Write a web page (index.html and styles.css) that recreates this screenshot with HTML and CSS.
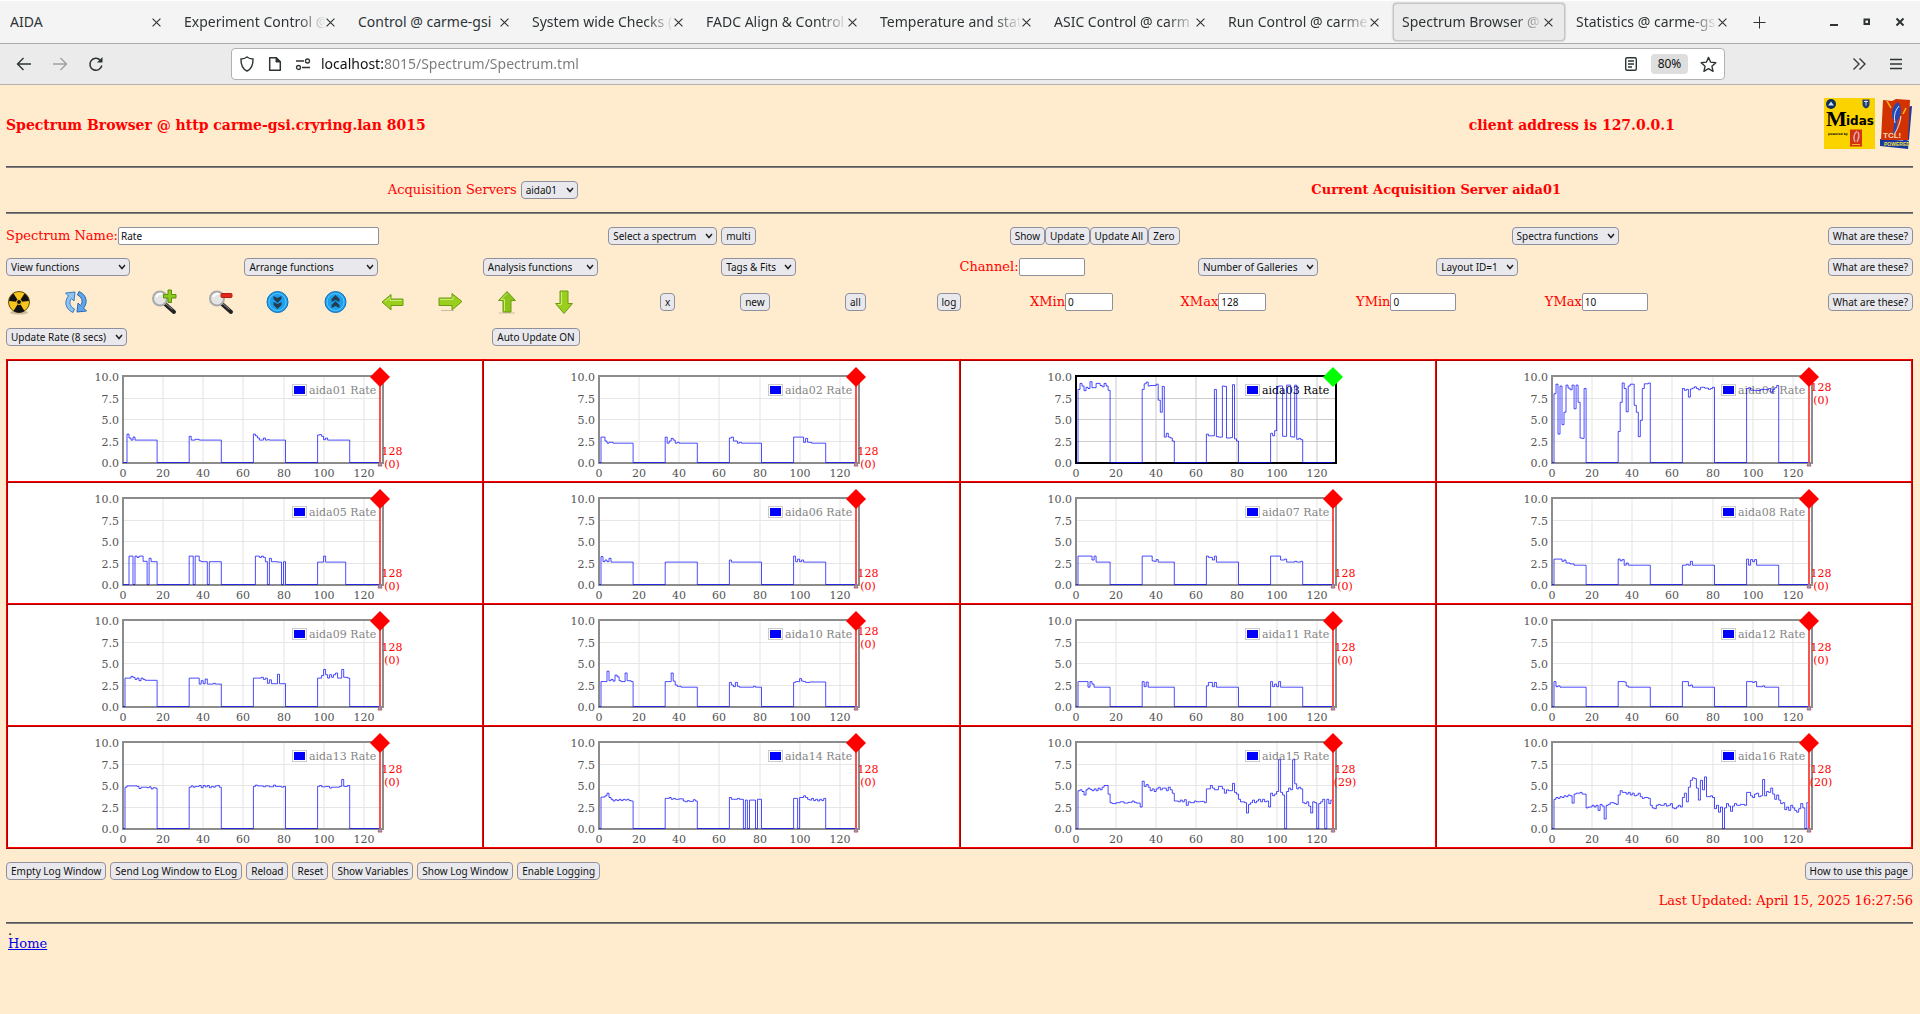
FILE: index.html
```html
<!DOCTYPE html>
<html lang="en">
<head>
    <meta charset="UTF-8">
    <meta name="viewport" content="width=device-width, initial-scale=1.0">
    <title>Spectrum Browser @ carme-gsi</title>

    <link rel="stylesheet" href="styles.css">
</head>
<body>
    <div class="browser">
        <div class="tab-bar">
            <div class="tab"><span class="tab-title">AIDA</span><button class="tab-close" aria-label="Close tab"><svg viewBox="0 0 8 8"><path d="M0.5 0.5l7 7M7.5 0.5l-7 7"/></svg></button></div>
            <div class="tab"><span class="tab-title fade">Experiment Control @</span><button class="tab-close" aria-label="Close tab"><svg viewBox="0 0 8 8"><path d="M0.5 0.5l7 7M7.5 0.5l-7 7"/></svg></button></div>
            <div class="tab"><span class="tab-title">Control @ carme-gsi</span><button class="tab-close" aria-label="Close tab"><svg viewBox="0 0 8 8"><path d="M0.5 0.5l7 7M7.5 0.5l-7 7"/></svg></button></div>
            <div class="tab"><span class="tab-title fade">System wide Checks (</span><button class="tab-close" aria-label="Close tab"><svg viewBox="0 0 8 8"><path d="M0.5 0.5l7 7M7.5 0.5l-7 7"/></svg></button></div>
            <div class="tab"><span class="tab-title fade">FADC Align &amp; Control</span><button class="tab-close" aria-label="Close tab"><svg viewBox="0 0 8 8"><path d="M0.5 0.5l7 7M7.5 0.5l-7 7"/></svg></button></div>
            <div class="tab"><span class="tab-title fade">Temperature and stat</span><button class="tab-close" aria-label="Close tab"><svg viewBox="0 0 8 8"><path d="M0.5 0.5l7 7M7.5 0.5l-7 7"/></svg></button></div>
            <div class="tab"><span class="tab-title fade">ASIC Control @ carm</span><button class="tab-close" aria-label="Close tab"><svg viewBox="0 0 8 8"><path d="M0.5 0.5l7 7M7.5 0.5l-7 7"/></svg></button></div>
            <div class="tab"><span class="tab-title fade">Run Control @ carme</span><button class="tab-close" aria-label="Close tab"><svg viewBox="0 0 8 8"><path d="M0.5 0.5l7 7M7.5 0.5l-7 7"/></svg></button></div>
            <div class="tab active"><span class="tab-title fade">Spectrum Browser @</span><button class="tab-close" aria-label="Close tab"><svg viewBox="0 0 8 8"><path d="M0.5 0.5l7 7M7.5 0.5l-7 7"/></svg></button></div>
            <div class="tab"><span class="tab-title fade">Statistics @ carme-gs</span><button class="tab-close" aria-label="Close tab"><svg viewBox="0 0 8 8"><path d="M0.5 0.5l7 7M7.5 0.5l-7 7"/></svg></button></div>
            <button class="chrome-button new-tab" aria-label="New tab"><svg width="13" height="13" viewBox="0 0 13 13"><path d="M6.5 0.5v12M0.5 6.5h12"/></svg></button>
            <div class="window-controls">
                <button class="chrome-button" aria-label="Minimize"><svg width="10" height="10" viewBox="0 0 10 10"><path d="M1 8h8" stroke-width="2"/></svg></button>
                <button class="chrome-button" aria-label="Restore"><svg width="10" height="10" viewBox="0 0 10 10"><path d="M2.500 2.500h4.500v4.500h-4.500z" stroke-width="2"/></svg></button>
                <button class="chrome-button" aria-label="Close window"><svg width="10" height="10" viewBox="0 0 10 10"><path d="M1.500 1.500l7 7M8.500 1.500l-7 7" stroke-width="2"/></svg></button>
            </div>
        </div>
        <div class="nav-bar">
            <div class="nav-buttons">
                <button class="chrome-button" aria-label="Back"><svg width="16" height="16" viewBox="0 0 16 16"><path d="M15 8H1.500M7.500 2L1.500 8l6 6" stroke-width="1.400"/></svg></button>
                <button class="chrome-button disabled" aria-label="Forward"><svg width="16" height="16" viewBox="0 0 16 16"><path d="M1 8h13.500M8.500 2l6 6-6 6" stroke-width="1.400"/></svg></button>
                <button class="chrome-button" aria-label="Reload"><svg width="16" height="16" viewBox="0 0 16 16"><path d="M13.800 9.500A6 6 0 1 1 12.300 4.200" stroke-width="1.500"/><path d="M14.500 1v5.500H9z" fill="#2e3436" stroke="none"/></svg></button>
            </div>
            <div class="url-box">
                <svg width="16" height="16" viewBox="0 0 16 16"><path d="M8 1C6 2.600 4 3 2 3c-.2 6 1.500 10 6 12 4.500-2 6.200-6 6-12-2 0-4-.4-6-2z" stroke-width="1.400"/></svg>
                <svg width="16" height="16" viewBox="0 0 16 16"><path d="M2.700 1.700h6.600l4 4v8.600H2.700z" stroke-width="1.500" stroke-linejoin="round"/><path d="M9 1.500v4.500h4.500z" fill="#2e3436"/></svg>
                <svg width="16" height="16" viewBox="0 0 16 16"><path d="M1 5h8M7 11.500h8" stroke-width="1.500"/><circle cx="12.500" cy="5" r="2" stroke-width="1.300"/><circle cx="3.500" cy="11.500" r="2" stroke-width="1.300"/></svg>
                <input class="url" type="text" aria-label="Address" value="localhost:8015/Spectrum/Spectrum.tml">
                <svg width="16" height="16" viewBox="0 0 16 16"><rect x="2.700" y="1.700" width="10.600" height="12.600" rx="1.500" stroke-width="1.400"/><path d="M5 5h6M5 8h6M5 11h4" stroke-width="1.300"/></svg>
                <button class="zoom-level">80%</button>
                <svg width="17" height="17" viewBox="0 0 16 16"><path d="M8 1.300l2 4.500 4.900.5-3.700 3.300 1.100 4.800L8 11.900l-4.300 2.500 1.100-4.800L1.100 6.300 6 5.800z" stroke-width="1.300" stroke-linejoin="round"/></svg>
            </div>
            <div class="nav-menu">
                <button class="chrome-button" aria-label="More tools"><svg width="14" height="14" viewBox="0 0 14 14"><path d="M1.500 1.500L7 7l-5.500 5.500M7.500 1.500L13 7l-5.500 5.500" stroke-width="1.300"/></svg></button>
                <button class="chrome-button" aria-label="Menu"><svg width="14" height="14" viewBox="0 0 14 14"><path d="M1 2.500h12M1 7h12M1 11.500h12" stroke-width="1.300"/></svg></button>
            </div>
        </div>
    </div>

    <main>
        <header>
            <h1>Spectrum Browser @ http carme-gsi.cryring.lan 8015</h1>
            <h1>client address is 127.0.0.1</h1>
            <div class="logos">
                <svg class="logo-midas" viewBox="0 0 51 51" aria-label="Midas">
                    <rect width="51" height="51" fill="#fbd400"/>
                    <circle cx="7" cy="6" r="5" fill="#0c2f60"/>
                    <path d="M4 7.500l3-4 3 4z" fill="#cfe3ee"/>
                    <path d="M38.500 1.500h7v4.500q0 3-3.500 4.500-3.500-1.500-3.500-4.500z" fill="#1d3a78"/>
                    <path d="M40 3.500h4M42 2.500v5" stroke="#dde" fill="none"/>
                    <text x="2" y="28" class="logo-m">M</text>
                    <text x="22" y="27" class="logo-idas">idas</text>
                    <text x="4" y="37" class="logo-small">powered by</text>
                    <rect x="26" y="31.500" width="12" height="17" fill="#d4330c"/>
                    <path d="M33 33q-5 5-2 11M34 34q2 4-1 10" stroke="#d9a9c0" fill="none" stroke-width="1.500"/>
                    <path d="M28 46.500h8" stroke="#f2b52c" fill="none"/>
                </svg>
                <svg class="logo-tcl" viewBox="0 0 33 51" aria-label="Tcl powered">
                    <path d="M26 9l6-1-3 34-6 2z" fill="#1838a0"/>
                    <path d="M0 41l29 2-1 8-28-3z" fill="#1838a0"/>
                    <path d="M3 2l9 1 4-2 14 1-2 40L1 42z" fill="#d23200"/>
                    <path d="M18 4c-6 4-8 12-4 19 0 6-1 10-1 14 4-4 4-9 4-14 5-5 5-14 1-19z" fill="#2448b4"/>
                    <path d="M19 8c-5 6-5 11-4 17M21 18c-1 7-3 12-6 17" stroke="#dfe8ff" fill="none"/>
                    <path d="M7 3l4 7M26 10l-3 6" stroke="#f5c020" fill="none" stroke-width="1.500"/>
                    <text x="3" y="40" class="logo-tcl-text">TCL!</text>
                    <text x="4" y="48" class="logo-powered">POWERED</text>
                </svg>
            </div>
        </header>
        <hr>
        <section class="row servers">
            <div>
                <label for="server">Acquisition Servers</label>
                <select id="server"><option>aida01</option></select>
            </div>
            <strong>Current Acquisition Server aida01</strong>
        </section>
        <hr>
        <section class="row spectrum">
            <div class="field"><label for="spectrum-name">Spectrum Name:</label><input id="spectrum-name" type="text" value="Rate"></div>
            <div>
                <select aria-label="Select a spectrum"><option>Select a spectrum</option></select>
                <button>multi</button>
            </div>
            <div class="field"><button>Show</button><button>Update</button><button>Update All</button><button>Zero</button></div>
            <div><select aria-label="Spectra functions"><option>Spectra functions</option></select></div>
            <button class="help">What are these?</button>
        </section>
        <section class="row functions">
            <div><select class="select-view" aria-label="View functions"><option>View functions</option></select></div>
            <div><select class="select-arrange" aria-label="Arrange functions"><option>Arrange functions</option></select></div>
            <div><select class="select-analysis" aria-label="Analysis functions"><option>Analysis functions</option></select></div>
            <div><select aria-label="Tags and fits"><option>Tags &amp; Fits</option></select></div>
            <div class="field"><label for="channel">Channel:</label><input id="channel" type="text"></div>
            <div><select aria-label="Number of galleries"><option>Number of Galleries</option></select></div>
            <div><select aria-label="Layout"><option>Layout ID=1</option></select></div>
            <button class="help">What are these?</button>
        </section>
        <section class="row tools">
            <button class="icon" aria-label="Clear">
                <svg viewBox="0 0 26 26"><ellipse cx="13" cy="23.500" rx="9" ry="2" fill="#0003"/><circle cx="13" cy="13" r="10.500" fill="#f8c51c" stroke="#5b5006"/><path d="M13 13L3 12a10 10 0 0 1 4.500-7.500zM13 13l5.500-8.500A10 10 0 0 1 23 12zM13 13l5.500 9a10 10 0 0 1-11 0z" fill="#111"/><circle cx="13" cy="13" r="2.500" fill="#111" stroke="#f8c51c"/></svg>
            </button>
            <button class="icon" aria-label="Refresh">
                <svg viewBox="0 0 26 26"><path d="M10 23.500C2 20 1 12 5.500 7L2.500 4l9.500-1-1 9-2.500-2.500C5.500 13 7 18 11.500 20z" fill="#8ec3f2" stroke="#3a7cc4"/><path d="M16 2.500C24 6 25 14 20.500 19l3 3-9.500 1 1-9 2.500 2.500C20.500 13 19 8 14.500 6z" fill="#5fa5ea" stroke="#2a68b4"/></svg>
            </button>
            <button class="icon" aria-label="Zoom in">
                <svg viewBox="0 0 26 26"><path d="M14 15l9 8" stroke="#222" stroke-width="4" stroke-linecap="round"/><path d="M14.500 14.500l7 6" stroke="#999" stroke-width="1"/><circle cx="9" cy="9.500" r="7" fill="#e4e4e2" stroke="#aaa" stroke-width="2"/><path d="M5 8q2-4 6-3" stroke="#fff" stroke-width="2" fill="none"/><path d="M17 1h3.500v4.500H25V9h-4.500v4.500H17V9h-4.500V5.500H17z" fill="#8ccc1c" stroke="#5b8f08"/></svg>
            </button>
            <button class="icon" aria-label="Zoom out">
                <svg viewBox="0 0 26 26"><path d="M14 15l9 8" stroke="#222" stroke-width="4" stroke-linecap="round"/><path d="M14.500 14.500l7 6" stroke="#999" stroke-width="1"/><circle cx="9" cy="9.500" r="7" fill="#e4e4e2" stroke="#aaa" stroke-width="2"/><path d="M5 8q2-4 6-3" stroke="#fff" stroke-width="2" fill="none"/><rect x="13" y="4.500" width="11" height="4" rx="1" fill="#e0281c" stroke="#b61c10"/></svg>
            </button>
            <button class="icon" aria-label="Compress">
                <svg viewBox="0 0 26 26"><circle cx="12.500" cy="13" r="10.500" fill="#1ba0ee" stroke="#0e6fba"/><circle cx="12.500" cy="13" r="8.500" fill="none" stroke="#62c4fa"/><path d="M8.500 7l4 2 4-2v3l-4 4-4-4zM8.500 13l4 2 4-2v3l-4 4-4-4z" fill="#263c50"/></svg>
            </button>
            <button class="icon" aria-label="Expand">
                <svg viewBox="0 0 26 26"><circle cx="12.500" cy="13" r="10.500" fill="#1ba0ee" stroke="#0e6fba"/><circle cx="12.500" cy="13" r="8.500" fill="none" stroke="#62c4fa"/><path d="M8.500 13l4-2 4 2v-3l-4-4-4 4zM8.500 19l4-2 4 2v-3l-4-4-4 4z" fill="#263c50"/></svg>
            </button>
            <button class="icon" aria-label="Left">
                <svg viewBox="0 0 26 26"><path d="M2 13l9-7.500V10h12v6.500H11V21z" fill="#9bcf1e" stroke="#6b9c10"/><path d="M5 12.500l5-4v3h12" stroke="#cdec7a" fill="none"/></svg>
            </button>
            <button class="icon" aria-label="Right">
                <svg viewBox="0 0 26 26"><path d="M25 12.500L15 4.500V9H2v7.500h13V21z" fill="#9bcf1e" stroke="#6b9c10"/><path d="M3 10.500h13v-3" stroke="#cdec7a" fill="none"/><path d="M4 21.500h13" stroke="#0003"/></svg>
            </button>
            <button class="icon" aria-label="Up">
                <svg viewBox="0 0 26 26"><path d="M13 2.500l8.500 9H17V23H9V11.500H4.500z" fill="#8cc318" stroke="#6b9c10"/><path d="M13 4.500l-6 6h3.500V22" stroke="#cdec7a" fill="none"/><path d="M5 24h16" stroke="#0003"/></svg>
            </button>
            <button class="icon" aria-label="Down">
                <svg viewBox="0 0 26 26"><path d="M13 24.500l8.500-10H17V2H9v12.500H4.500z" fill="#9bcf1e" stroke="#6b9c10"/><path d="M10.500 3v12.500H7" stroke="#cdec7a" fill="none"/></svg>
            </button>
            <div><button>x</button></div>
            <div><button>new</button></div>
            <div><button>all</button></div>
            <div><button>log</button></div>
            <div class="field"><label for="xmin">XMin</label><input id="xmin" class="short" type="text" value="0"></div>
            <div class="field"><label for="xmax">XMax</label><input id="xmax" class="short" type="text" value="128"></div>
            <div class="field"><label for="ymin">YMin</label><input id="ymin" type="text" value="0"></div>
            <div class="field"><label for="ymax">YMax</label><input id="ymax" type="text" value="10"></div>
            <button class="help">What are these?</button>
        </section>
        <section class="row update">
            <div><select aria-label="Update rate"><option>Update Rate (8 secs)</option></select></div>
            <div><button>Auto Update ON</button></div>
        </section>

        <table class="gallery">
            <tbody id="gallery">
                <!-- Spectra go here -->
            </tbody>
        </table>

        <section class="row actions">
            <button>Empty Log Window</button>
            <button>Send Log Window to ELog</button>
            <button>Reload</button>
            <button>Reset</button>
            <button>Show Variables</button>
            <button>Show Log Window</button>
            <button>Enable Logging</button>
            <button class="help">How to use this page</button>
        </section>
        <div class="updated">Last Updated: April 15, 2025 16:27:56</div>
        <hr>
    </main>
    <footer>
        <div>.</div>
        <a href="#">Home</a>
    </footer>

    <script src="script.js"></script>
</body>
</html>
```
FILE: styles.css
```css
* {
    box-sizing: border-box;
}

body {
    margin: 0;
    background-color: #ffebcd;
    color: red;
    font-family: "DejaVu Serif", serif;
    font-size: 13px;
    line-height: 16px;
}

button, input, select {
    margin: 0;
    height: 18px;
    color: #111;
    font-family: "Noto Sans", sans-serif;
    font-size: 10px;
    line-height: 16px;
    border: 1px solid #8f8f9d;
    border-radius: 4px;
    background-color: #e9e9ed;
}

button {
    padding: 0 4px;
    white-space: nowrap;
}

input {
    width: 66px;
    padding: 0 2px;
    background-color: white;
    border-radius: 2px;
}

select {
    appearance: none;
    padding: 0 19px 0 4px;
    background-image: url("data:image/svg+xml,%3Csvg xmlns='http://www.w3.org/2000/svg' width='8' height='6'%3E%3Cpath d='M1 1l3 3.500L7 1' fill='none' stroke='%23222' stroke-width='1.500'/%3E%3C/svg%3E");
    background-repeat: no-repeat;
    background-position: right 3px center;
}

hr {
    width: 100%;
    margin: 0;
    border: 0;
    border-top: 1px solid #555;
    border-bottom: 1px solid #808080;
}

/* browser window */

.browser {
    color: #2e3436;
    font-family: "Noto Sans", sans-serif;
    background-color: #ebebeb;
    border-bottom: 1px solid #b2b2ae;
}

.browser svg {
    fill: none;
    stroke: #2e3436;
    flex: none;
}

.tab-bar {
    display: flex;
    align-items: center;
    gap: 2px;
    height: 44px;
    padding: 0 12px 0 1px;
    background-color: #f4f4f4;
    border-top: 1px solid white;
    border-bottom: 1px solid #a9a9a6;
}

.tab {
    display: flex;
    align-items: center;
    flex: 0 1 172px;
    min-width: 0;
    height: 38px;
    padding: 0 11px 0 8px;
    border: 1px solid transparent;
    border-radius: 4px;
}

.tab.active {
    background-color: #ebebeb;
    border-color: #c4c4c4;
    box-shadow: 0 0 2px #999;
}

.tab-title {
    flex: 1;
    overflow: hidden;
    white-space: nowrap;
    font-size: 14px;
    line-height: 22px;
}

.fade {
    -webkit-mask-image: linear-gradient(to right, #000 80%, transparent);
    mask-image: linear-gradient(to right, #000 80%, transparent);
}

.tab-close {
    display: flex;
    align-items: center;
    padding: 0;
    border: 0;
    background: none;
}

.tab-close svg {
    width: 9px;
    height: 9px;
}

.chrome-button {
    display: flex;
    align-items: center;
    justify-content: center;
    width: 16px;
    padding: 0;
    border: 0;
    background: none;
}

.disabled {
    opacity: 0.4;
}

.new-tab {
    margin-left: 10px;
}

.window-controls {
    display: flex;
    gap: 17px;
    margin-left: auto;
}

.nav-bar {
    display: flex;
    align-items: center;
    justify-content: space-between;
    height: 40px;
    padding: 0 16px;
}

.nav-buttons {
    display: flex;
    gap: 20px;
    width: 215px;
}

.url-box {
    display: flex;
    align-items: center;
    gap: 12px;
    flex: 1;
    height: 32px;
    padding: 0 7px;
    background-color: white;
    border: 1px solid #b2b2ae;
    border-radius: 4px;
}

.url {
    flex: 1;
    height: 24px;
    margin-left: -2px;
    padding: 0;
    border: 0;
    font-size: 14px;
    line-height: 24px;
    /* host name is darker than the path */
    color: transparent;
    caret-color: black;
    background-image: linear-gradient(to right, #111 62px, #7a7a7a 62px);
    -webkit-background-clip: text;
    background-clip: text;
}

.zoom-level {
    width: 37px;
    height: 20px;
    border: 0;
    background-color: #dedede;
    font-size: 12px;
}

.nav-menu {
    display: flex;
    justify-content: flex-end;
    gap: 21px;
    width: 179px;
}

/* page */

main {
    display: flex;
    flex-direction: column;
    gap: 13px;
    padding: 13px 7px 0 6px;
}

header {
    display: grid;
    grid-template-columns: 76.7% 1fr auto;
    align-items: center;
    margin-bottom: 4px;
}

h1 {
    margin: 0;
    padding-top: 2px;
    font-size: 14px;
    line-height: 18px;
}

.logos {
    display: flex;
    gap: 5px;
}

.logo-midas {
    width: 51px;
    height: 51px;
}

.logo-tcl {
    width: 33px;
    height: 51px;
}

.logo-m {
    font: bold 22px "Liberation Serif", serif;
}

.logo-idas {
    font: bold 12px "DejaVu Sans", sans-serif;
}

.logo-small {
    font: bold 3px "DejaVu Sans", sans-serif;
}

.logo-tcl-text {
    font: bold 8px "Liberation Sans", sans-serif;
    fill: #f5d9c0;
}

.logo-powered {
    font: bold 5px "Liberation Sans", sans-serif;
    fill: #f0e040;
}

.row {
    display: grid;
    align-items: center;
    min-height: 18px;
}

.row > div {
    display: flex;
    align-items: center;
    gap: 4px;
}

.row > .field {
    gap: 0;
}

.help {
    justify-self: end;
}

.servers {
    grid-template-columns: 1fr 1fr;
    justify-items: center;
}

.spectrum {
    grid-template-columns: 6fr 4fr 5fr 3fr 1fr;
}

#spectrum-name {
    width: 261px;
}

.functions {
    grid-template-columns: repeat(8, 1fr);
}

.select-view {
    width: 124px;
}

.select-arrange {
    width: 134px;
}

.select-analysis {
    width: 115px;
}

.tools {
    grid-template-columns: 3% 4.600% repeat(7, 3%) 5.700% 4.200% 5.500% 4.800% 4.900% 7.900% 9.200% 9.900% 1fr auto;
}

.icon {
    width: 26px;
    height: 26px;
    padding: 0;
    border: 0;
    background: none;
}

.icon svg {
    display: block;
    width: 26px;
    height: 26px;
}

.short {
    width: 48px;
}

.update {
    grid-template-columns: 25.500% 1fr;
}

.actions {
    display: flex;
    gap: 4px;
}

.actions .help {
    margin-left: auto;
}

.updated {
    text-align: right;
}

footer {
    padding: 0 8px;
    line-height: 13px;
    color: black;
}

footer a {
    display: block;
    width: max-content;
    color: #00e;
}

/* gallery of spectra */

.gallery {
    width: 100%;
    table-layout: fixed;
    border-collapse: collapse;
    background-color: white;
}

.gallery td {
    padding: 0;
    border: 2px ridge red;
}

.plot {
    display: block;
    width: 320px;
    height: 120px;
    margin: 0 auto;
    overflow: visible;
    font-size: 11px;
}

.grid-x {
    stroke: #f1f1f1;
    stroke-width: 2;
}

.grid-y {
    stroke: #e6e6e6;
}

.frame {
    fill: none;
    stroke: #8c8c8c;
    stroke-width: 2;
}

.axis {
    fill: #545454;
}

.axis-y {
    text-anchor: end;
}

.axis-x, .cursor-text {
    text-anchor: middle;
}

.trace {
    fill: none;
    stroke: blue;
    stroke-opacity: 0.7;
}

.swatch-box {
    fill: white;
    stroke: #ccc;
}

.swatch {
    fill: blue;
}

.legend {
    fill: #858585;
}

.cursor-line {
    stroke: #ff5050;
    stroke-width: 2;
}

.cursor-foot {
    fill: #7fb0d0;
    stroke: #c06070;
}

.cursor-text, .marker {
    fill: red;
}

.selected .frame {
    stroke: black;
}

.selected .grid-x {
    stroke: #e4e4e4;
}

.selected .grid-y {
    stroke: #ccc;
}

.selected .legend {
    fill: black;
}

.selected .marker {
    fill: lime;
}
```
FILE: script.js
```js
const _gallery = document.getElementById("gallery");
const _columns = 4;
const _selected = "aida03";

// plot area inside each svg
const _left = 38;
const _bottom = 102;
const _xScale = 2.006;
const _yScale = 8.6;

// label: y position of the cursor text, counts: value under the cursor
// steps: channel:value, the value holds until the next channel listed
const _spectra = [
    { name: "aida01", label: 94, counts: 0, steps: "2:3.3 3:2.85 4:2.6 5:2.95 6:2.6 17:0 33:3.05 34:2.6 36:2.7 38:2.6 49:0 65:3.3 66:3.1 67:2.85 68:2.6 70:2.85 71:2.6 72:2.65 73:2.6 81:0 97:3.2 98:3.25 99:3.05 100:2.65 101:2.85 102:2.6 113:0" },
    { name: "aida02", label: 94, counts: 0, steps: "1:2.95 3:2.5 4:2.25 5:2.35 7:2.25 17:0 33:2.95 34:2.25 35:2.5 36:2.8 37:2.6 38:2.25 39:2.35 40:2.25 49:0 65:2.85 66:2.95 67:2.5 69:2.25 70:2.35 71:2.25 81:0 97:2.95 102:2.35 103:2.8 104:2.35 106:2.25 113:0" },
    { name: "aida03", label: 94, counts: 0, steps: "1:8.5 2:9.2 3:8.9 4:8.35 5:8.75 6:8.6 7:9.4 8:8.7 10:9.2 12:8.95 13:8.8 14:9.2 15:8.9 16:8.4 17:0 33:8.5 34:9.15 35:9.35 36:8.9 37:8.95 40:9.1 41:7.25 42:5.85 43:8.85 44:2.95 45:3.4 46:2.95 47:2.85 48:2.5 49:0 65:3.3 66:3.1 69:8.5 70:3 71:2.95 73:8.9 74:8.85 75:2.85 77:2.9 78:9.05 79:2.75 80:2.5 81:0 97:3.4 98:3.1 99:3.7 100:8.8 101:8.9 103:3.05 105:9 107:3 108:2.95 109:9 110:2.7 111:2.8 112:2.65 113:0" },
    { name: "aida04", label: 30, counts: 0, steps: "1:8 2:9.1 3:3.3 4:8.9 5:4.4 6:5.85 7:9 8:8.65 9:8.45 10:9 11:6.25 12:9 13:7 14:2.85 15:2.8 16:8.6 17:0 33:3.6 34:7 35:9.25 36:8.6 37:5.9 38:8.9 39:9.1 41:6.65 42:5.85 43:3 44:4.9 45:8.6 46:9.15 48:9.25 49:0 65:8.6 66:8.4 67:8.5 68:7.6 69:8.55 70:8.65 71:8.8 72:8.6 73:8.45 74:8.75 76:8.65 78:8.5 79:8.6 80:8.75 81:0 97:8.6 98:8.7 99:8.4 103:8.35 104:8.5 107:8.45 108:8.6 109:8.1 110:8.5 111:8.7 112:8.95 113:0" },
    { name: "aida05", label: 94, counts: 0, steps: "3:3.3 5:0 6:3.3 7:3.15 8:3.3 10:2.7 12:0 13:3.05 14:2.65 17:0 33:3.3 35:0 36:3.3 38:2.75 39:2.65 42:0 43:2.65 49:0 66:3.3 68:3.15 69:3.3 70:3.15 71:2.65 72:0 73:3.05 74:2.65 77:2.6 79:0 80:2.65 81:0 97:2.6 100:3.3 101:2.6 111:0" },
    { name: "aida06", label: 94, counts: 0, steps: "1:3.25 2:2.65 3:2.85 4:2.65 5:3.05 6:2.6 17:0 33:2.6 49:0 65:2.85 66:2.6 81:0 97:3.3 98:2.65 99:2.95 100:2.65 101:2.85 102:2.6 113:0" },
    { name: "aida07", label: 94, counts: 0, steps: "1:3.3 8:2.85 9:3.3 10:2.6 17:0 33:3.3 38:2.75 39:2.7 40:2.9 41:2.6 49:0 65:3.3 66:3.15 68:2.85 69:3.3 70:2.6 81:0 97:3.3 102:2.85 104:2.95 105:2.6 109:2.7 110:2.6 112:2.7 113:0" },
    { name: "aida08", label: 94, counts: 0, steps: "1:2.95 5:2.7 6:2.85 7:2.5 9:2.4 11:2.25 17:0 33:2.95 34:2.75 35:2.9 36:2.25 37:2.5 38:2.25 49:0 65:2.25 67:2.35 68:2.25 69:2.7 70:2.25 81:0 97:2.95 98:2.25 99:2.9 100:2.65 101:2.9 102:2.25 113:0" },
    { name: "aida09", label: 46, counts: 0, steps: "1:3.3 4:3.5 5:3.4 6:3.15 7:3.3 8:3 9:3.3 10:3.15 11:3.05 17:0 33:3.3 38:2.6 39:3 40:2.65 41:3.2 42:2.6 45:2.7 46:2.6 49:0 65:3.3 69:3.4 70:3.15 71:3.3 72:2.7 73:3.1 74:2.65 77:3.75 78:2.65 81:0 97:3.3 99:3.6 100:4.3 101:3.7 102:3.3 103:3.7 104:3.4 105:3.7 106:3.9 107:3.3 109:4.3 110:3.4 112:3.3 113:0" },
    { name: "aida10", label: 30, counts: 0, steps: "1:2.9 4:4.1 5:3 6:3.15 7:2.95 8:3.65 9:3.45 10:3 11:2.9 13:3.9 14:3 16:2.9 17:0 33:2.9 36:3.9 37:2.95 38:2.5 39:2.35 41:2.25 49:0 65:2.8 66:2.5 67:2.3 68:2.8 69:2.35 70:2.25 77:2.35 78:2.25 81:0 97:2.8 98:2.9 100:3.25 101:2.95 102:2.9 103:2.8 105:2.85 113:0" },
    { name: "aida11", label: 46, counts: 0, steps: "1:2.9 6:2.25 7:2.9 8:2.6 9:2.25 17:0 33:2.9 34:2.3 35:2.85 36:2.25 49:0 65:2.4 66:2.8 68:2.3 69:2.8 70:2.25 81:0 97:2.9 98:2.3 99:2.6 100:2.3 101:2.9 102:2.25 113:0" },
    { name: "aida12", label: 46, counts: 0, steps: "1:2.9 2:2.3 3:2.4 4:2.25 17:0 33:2.9 36:2.85 37:2.4 38:2.25 49:0 65:2.9 68:2.4 69:2.5 70:2.25 81:0 97:2.9 100:2.8 101:2.9 102:2.3 105:2.4 106:2.25 113:0" },
    { name: "aida13", label: 46, counts: 0, steps: "1:4.8 2:4.95 7:4.9 8:4.65 9:4.8 12:4.75 13:4.85 14:4.6 15:4.75 16:4.7 17:0 33:4.8 34:4.95 35:4.8 36:4.9 38:5 39:4.75 40:5 41:4.85 42:5 43:4.75 44:4.9 45:4.8 46:4.95 47:5 48:4.8 49:0 65:4.9 66:5.05 67:4.95 70:4.85 71:4.95 73:4.85 75:5.05 76:4.9 79:4.8 80:4.9 81:0 97:4.9 98:5 99:4.85 101:4.9 103:4.7 104:4.8 108:4.9 109:5.7 110:4.9 112:5 113:0" },
    { name: "aida14", label: 46, counts: 0, steps: "1:3.65 3:3.8 4:4.1 5:3.6 6:3.4 7:3.2 8:3.35 9:3.25 10:3.4 11:3.25 12:3.4 13:3.3 14:3.4 15:3.25 16:3.2 17:0 33:3.5 35:3.6 36:3.4 37:3.5 38:3.4 40:3.45 42:3.2 43:3.1 44:3.25 45:3.15 47:3.35 48:3.2 49:0 65:3.6 66:3.4 69:3.5 70:3.4 72:0 73:3.3 74:0 75:3.3 78:0 79:3.4 81:0 97:3.5 99:0 100:3.6 102:3.8 103:3.6 104:3.4 105:3.3 106:3.5 107:3.25 108:3.4 109:3.2 110:3.4 111:3.25 112:3.5 113:0" },
    { name: "aida15", label: 46, counts: 29, steps: "1:4.4 2:4.5 3:4.3 4:3.9 5:4.5 6:4.7 7:4.55 8:4.4 9:4.6 10:4.4 11:4.7 12:4.5 13:4.8 14:5 16:4 17:3 18:2.9 20:3 22:3.1 24:2.95 26:3.05 28:3.2 29:3.05 30:2.95 32:2.5 33:5.5 34:4.9 35:5.1 36:4.8 37:4.4 38:4.6 39:4.3 40:4.6 41:4.8 42:4.5 43:4.7 45:4.4 46:4.8 47:4.5 48:4.1 49:3.2 51:3.1 52:3.3 53:3.1 54:3.35 55:2.7 56:3.1 57:3 59:3.2 60:3.1 62:3.15 64:3 65:4.6 67:5 68:4.7 69:4.5 71:4.9 73:4.6 74:4.1 75:4.5 76:4.4 78:5.25 79:4.2 80:4 81:3.4 82:3.1 84:3 85:1.8 86:2.8 87:3 88:3.3 89:3 90:3.2 91:3.4 92:3.1 93:3.4 94:3.1 95:3.2 96:2.5 97:4.1 98:3.8 99:4 100:4.3 101:8 102:4.2 103:3.9 104:0 105:4.3 106:4.7 107:4.5 108:8 109:5.2 110:4.6 111:4.8 112:4.6 113:3 114:2.9 115:3.1 116:2.6 117:1.8 118:3.1 119:3 120:0 121:2.9 122:3.1 123:3.4 124:0 125:3.4 126:2.9 127:3.3" },
    { name: "aida16", label: 46, counts: 20, steps: "1:3.4 2:3.6 3:3.5 4:3.7 5:3.6 6:3.8 7:3.7 8:3.9 9:3.8 10:2.95 11:4 12:4.1 14:4.2 15:4 17:2.4 18:2.5 20:2.7 21:2.5 22:2.7 23:2.1 24:2.8 25:2.6 26:1.1 27:2.7 28:2.8 29:3 31:2.9 32:2.8 33:3.9 34:4.4 35:4.2 37:4 38:4.2 39:3.9 40:4.1 41:3.8 42:3.9 43:4.1 44:3.7 45:3.5 46:3.6 48:3.5 49:2.7 50:2.4 51:2.3 52:2.7 53:2.8 54:2.7 56:2.9 57:2.6 58:2.7 59:2.9 60:2.4 61:2.3 62:2.5 63:2.7 64:2.5 65:3.6 66:4.1 67:3.1 68:4.8 69:5.6 70:5.9 71:5.8 72:4.7 73:3.3 74:5.6 75:4.5 76:6 77:3.7 79:3.8 80:3.6 81:2.3 82:2.7 83:1.9 84:2.5 85:0 86:2.4 87:2.9 88:2.6 89:2 90:2.6 91:2.9 92:2.7 94:2.8 96:2.7 97:4.2 99:3.8 100:3.6 101:4 102:4.1 103:3.7 104:3.8 105:5.7 106:3.8 107:4.3 108:4.2 109:4.7 110:4 111:3.4 112:3.9 113:3.3 114:2.9 115:3 116:2.2 117:2.5 118:2.1 119:2.7 120:2.4 121:2.1 122:1.9 123:2.3 124:2.9 125:2.4 126:0 127:3" }
];

function xPos(channel) {
    return Math.round((_left + channel * _xScale) * 10) / 10;
}

function yPos(value) {
    return Math.round((_bottom - 0.5 - value * _yScale) * 10) / 10;
}

function tracePath(steps) {
    let path = "M" + xPos(0) + " " + yPos(0);

    for (const step of steps.split(" ")) {
        const [channel, value] = step.split(":").map(Number);
        path += "H" + xPos(channel) + "V" + yPos(value);
    }

    return path + "H" + xPos(128);
}

function makePlot(spectrum) {
    const selected = spectrum.name === _selected;
    let svg = '<svg class="plot' + (selected ? " selected" : "") + '" viewBox="0 0 320 120">';

    for (let x = 0; x <= 120; x += 20) {
        if (x) {
            svg += '<path class="grid-x" d="M' + Math.round(xPos(x)) + ' 15V102"/>';
        }
        svg += '<text class="axis axis-x" x="' + Math.round(xPos(x)) + '" y="116">' + x + '</text>';
    }
    for (let y = 0; y <= 10; y += 2.5) {
        const gridY = Math.floor(yPos(y)) + 0.5;
        if (y) {
            svg += '<path class="grid-y" d="M38 ' + gridY + 'H297"/>';
        }
        svg += '<text class="axis axis-y" x="34" y="' + (gridY + 4.5) + '">' + y.toFixed(1) + '</text>';
    }

    svg += '<rect class="frame" x="38" y="15" width="260" height="87"/>';
    svg += '<rect class="swatch-box" x="207.500" y="23.500" width="14" height="11"/>';
    svg += '<rect class="swatch" x="209" y="25" width="11" height="8"/>';
    svg += '<text class="legend" x="224" y="33">' + spectrum.name + ' Rate</text>';
    svg += '<path class="trace" d="' + tracePath(spectrum.steps) + '"/>';

    if (!selected) {
        svg += '<path class="cursor-line" d="M295 16V102"/>';
        svg += '<path class="cursor-foot" d="M295 100l2 5h-4z"/>';
        svg += '<text class="cursor-text" x="307" y="' + spectrum.label + '">128</text>';
        svg += '<text class="cursor-text" x="307" y="' + (spectrum.label + 13) + '">(' + spectrum.counts + ')</text>';
    }
    svg += '<path class="marker" d="M295 6l10 10-10 10-10-10z"/>';

    return svg + '</svg>';
}

function main() {
    for (let i = 0; i < _spectra.length; i += _columns) {
        const row = document.createElement("tr");

        for (const spectrum of _spectra.slice(i, i + _columns)) {
            const cell = document.createElement("td");
            cell.innerHTML = makePlot(spectrum);
            row.appendChild(cell);
        }
        _gallery.appendChild(row);
    }
}

main();
```
